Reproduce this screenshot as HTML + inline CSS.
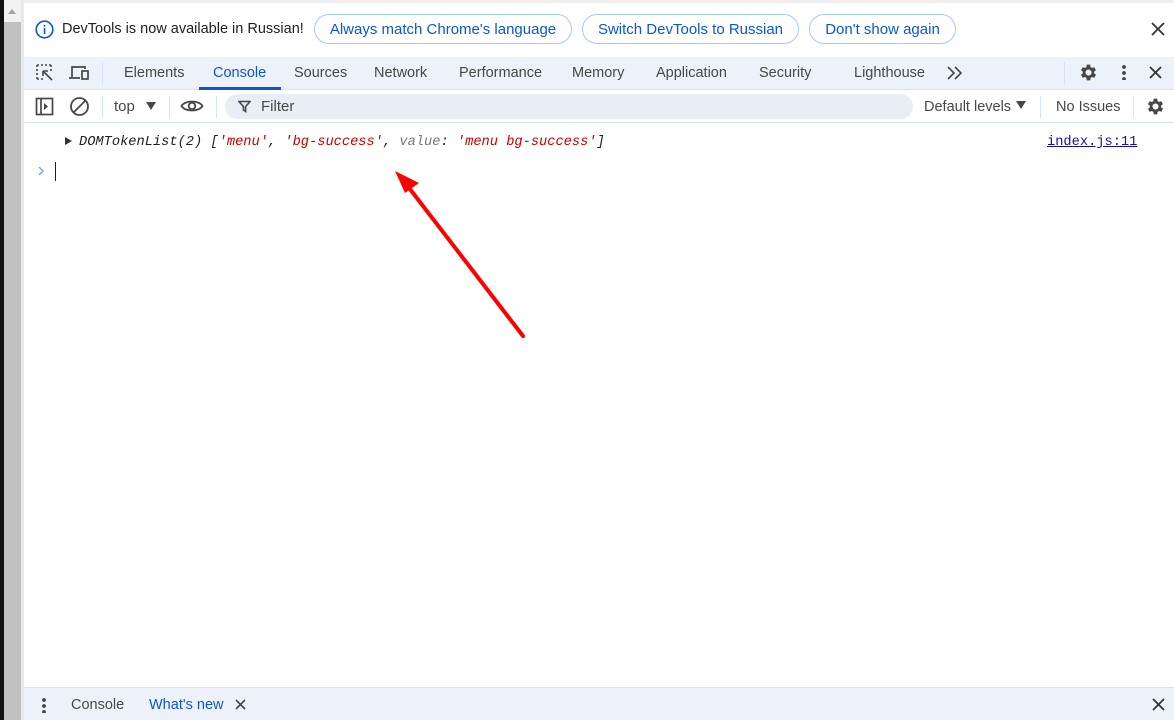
<!DOCTYPE html>
<html><head><meta charset="utf-8"><style>
*{margin:0;padding:0;box-sizing:border-box}
body{width:1174px;height:720px;overflow:hidden;background:#fff;font-family:"Liberation Sans",sans-serif;font-size:14px;color:#1f1f1f;position:relative}
.a{position:absolute;white-space:nowrap}
.btn{position:absolute;top:14px;height:30px;border:1px solid #a8c7fa;border-radius:15px;color:#0b57d0;font-size:15px;line-height:29px;text-align:center}
.tab{position:absolute;top:65px;font-size:14.5px;color:#474747}
.mono{font-family:"Liberation Mono",monospace;font-size:13.7px;font-style:italic}
</style></head><body>
<div class="a" style="left:0;top:0;width:4px;height:720px;background:#111"></div>
<div class="a" style="left:4px;top:0;width:17px;height:720px;background:#c1c1c1"></div>
<div class="a" style="left:4px;top:0;width:17px;height:22px;background:#f1f1f1"></div>
<div class="a" style="left:8px;top:9px;width:0;height:0;border-left:4px solid transparent;border-right:4px solid transparent;border-bottom:5px solid #a3a3a3"></div>
<div class="a" style="left:21px;top:0;width:3px;height:720px;background:#e8e8e8"></div>
<div class="a" style="left:24px;top:0;width:1150px;height:3px;background:#eee"></div>

<svg class="a" style="left:35px;top:20px" width="19" height="19" viewBox="0 0 19 19"><circle cx="9.5" cy="9.5" r="8.3" fill="none" stroke="#0b57d0" stroke-width="1.6"/><rect x="8.7" y="8" width="1.6" height="6" fill="#0b57d0"/><rect x="8.7" y="5" width="1.6" height="1.7" fill="#0b57d0"/></svg>
<div class="a" style="left:62px;top:21px;font-size:14.5px">DevTools is now available in Russian!</div>
<div class="btn" style="left:314px;width:258px">Always match Chrome's language</div>
<div class="btn" style="left:582px;width:217px">Switch DevTools to Russian</div>
<div class="btn" style="left:809px;width:147px">Don't show again</div>
<svg class="a" style="left:1151px;top:22px" width="14" height="14" viewBox="0 0 14 14" stroke="#333" stroke-width="1.8"><path d="M1 1l12 12M13 1L1 13"/></svg>

<div class="a" style="left:24px;top:57px;width:1150px;height:33px;background:#edf2fa;border-bottom:1px solid #d3e3fd"></div>
<svg class="a" style="left:35px;top:63px" width="20" height="20" viewBox="0 0 20 20" fill="none" stroke="#474747" stroke-width="1.6"><path d="M2 2h2M6 2h2M10 2h2M14 2h2M2 2v2M2 6v2M2 10v2M2 14v2M2 16h2M6 16h2M16 2v2M16 6v2"/><path d="M8 8l9 9M8 8h5M8 8v5"/></svg>
<svg class="a" style="left:68px;top:63px" width="22" height="20" viewBox="0 0 22 20" fill="none" stroke="#474747" stroke-width="1.7"><path d="M4 14V4h13v2M1 15h11"/><rect x="14" y="8" width="6" height="8"/></svg>
<div class="a" style="left:102px;top:62px;width:1px;height:22px;background:#d3e3fd"></div>
<div class="tab" style="left:124px">Elements</div>
<div class="tab" style="left:213px;color:#0b57d0">Console</div>
<div class="a" style="left:199px;top:87px;width:82px;height:3px;background:#0b57d0"></div>
<div class="tab" style="left:294px">Sources</div>
<div class="tab" style="left:374px">Network</div>
<div class="tab" style="left:459px">Performance</div>
<div class="tab" style="left:572px">Memory</div>
<div class="tab" style="left:656px">Application</div>
<div class="tab" style="left:759px">Security</div>
<div class="tab" style="left:854px">Lighthouse</div>
<svg class="a" style="left:946px;top:66px" width="17" height="14" viewBox="0 0 17 14" fill="none" stroke="#474747" stroke-width="1.6"><path d="M2 1l6 6-6 6M9 1l6 6-6 6"/></svg>
<div class="a" style="left:1064px;top:62px;width:1px;height:22px;background:#d3e3fd"></div>
<svg class="a" style="left:1078px;top:62px" width="21" height="21" viewBox="0 0 24 24"><path fill="#474747" d="M19.4 13a7.5 7.5 0 000-2l2.1-1.6-2-3.5-2.5 1a7 7 0 00-1.7-1L15 3h-4l-.4 2.9a7 7 0 00-1.7 1l-2.5-1-2 3.5L6.5 11a7.5 7.5 0 000 2l-2.1 1.6 2 3.5 2.5-1a7 7 0 001.7 1L11 21h4l.4-2.9a7 7 0 001.7-1l2.5 1 2-3.5zM13 15.5a3.5 3.5 0 110-7 3.5 3.5 0 010 7z" transform="translate(-1 0)"/></svg>
<div class="a" style="left:1122px;top:64px;width:4px;height:16px;background:radial-gradient(circle,#474747 1.8px,transparent 2px) 0 0/4px 6px"></div>
<svg class="a" style="left:1149px;top:66px" width="13" height="13" viewBox="0 0 13 13" stroke="#333" stroke-width="1.8"><path d="M1 1l11 11M12 1L1 12"/></svg>

<div class="a" style="left:24px;top:122px;width:1150px;height:1px;background:#d3e3fd"></div>
<svg class="a" style="left:35px;top:97px" width="19" height="19" viewBox="0 0 19 19" fill="none" stroke="#474747" stroke-width="1.7"><rect x="1.5" y="1.5" width="16" height="16"/><path d="M6 1.5v16"/><path d="M9 6l4 3.5-4 3.5z" fill="#474747" stroke="none"/></svg>
<svg class="a" style="left:69px;top:96px" width="21" height="21" viewBox="0 0 21 21" fill="none" stroke="#474747" stroke-width="1.8"><circle cx="10.5" cy="10.5" r="8.5"/><path d="M4.5 16.5l12-12"/></svg>
<div class="a" style="left:102px;top:96px;width:1px;height:22px;background:#d3e3fd"></div>
<div class="a" style="left:114px;top:98px;font-size:15px;color:#474747">top</div>
<div class="a" style="left:146px;top:102px;border-left:5px solid transparent;border-right:5px solid transparent;border-top:8px solid #474747"></div>
<div class="a" style="left:169px;top:96px;width:1px;height:22px;background:#d3e3fd"></div>
<svg class="a" style="left:180px;top:98px" width="24" height="16" viewBox="0 0 24 16" fill="none" stroke="#474747" stroke-width="1.8"><path d="M1.5 8C5 2 19 2 22.5 8 19 14 5 14 1.5 8z"/><circle cx="12" cy="8" r="3.3"/></svg>
<div class="a" style="left:216px;top:96px;width:1px;height:22px;background:#d3e3fd"></div>
<div class="a" style="left:225px;top:94px;width:688px;height:25px;border-radius:13px;background:#e9eef6"></div>
<svg class="a" style="left:238px;top:100px" width="13" height="13" viewBox="0 0 13 13" fill="none" stroke="#474747" stroke-width="1.6"><path d="M1 1.5h11L7.6 6.5v5L5.4 10V6.5z"/></svg>
<div class="a" style="left:261px;top:98px;font-size:15px;color:#474747">Filter</div>
<div class="a" style="left:924px;top:99px;font-size:14.5px;color:#474747">Default levels</div>
<div class="a" style="left:1016px;top:101px;border-left:5px solid transparent;border-right:5px solid transparent;border-top:8px solid #474747"></div>
<div class="a" style="left:1040px;top:96px;width:1px;height:22px;background:#d3e3fd"></div>
<div class="a" style="left:1056px;top:99px;font-size:14.5px;color:#474747">No Issues</div>
<div class="a" style="left:1133px;top:96px;width:1px;height:22px;background:#d3e3fd"></div>
<svg class="a" style="left:1145px;top:96px" width="21" height="21" viewBox="0 0 24 24"><path fill="#474747" d="M19.4 13a7.5 7.5 0 000-2l2.1-1.6-2-3.5-2.5 1a7 7 0 00-1.7-1L15 3h-4l-.4 2.9a7 7 0 00-1.7 1l-2.5-1-2 3.5L6.5 11a7.5 7.5 0 000 2l-2.1 1.6 2 3.5 2.5-1a7 7 0 001.7 1L11 21h4l.4-2.9a7 7 0 001.7-1l2.5 1 2-3.5zM13 15.5a3.5 3.5 0 110-7 3.5 3.5 0 010 7z" transform="translate(-1 0)"/></svg>

<div class="a" style="left:65px;top:137px;border-top:4.5px solid transparent;border-bottom:4.5px solid transparent;border-left:7px solid #333"></div>
<div class="a mono" style="left:79px;top:135px;color:#1f1f1f">DOMTokenList(2) [<span style="color:#c80000">'menu'</span>, <span style="color:#c80000">'bg-success'</span>, <span style="color:#777">value</span>: <span style="color:#c80000">'menu bg-success'</span>]</div>
<div class="a" style="left:1047px;top:135px;font-family:'Liberation Mono',monospace;font-size:13.7px;color:#1a0dab;text-decoration:underline">index.js:11</div>
<svg class="a" style="left:38px;top:166px" width="7" height="10" viewBox="0 0 7 10" fill="none" stroke="#7aa7f0" stroke-width="1.5"><path d="M1 1l4 4-4 4"/></svg>
<div class="a" style="left:55px;top:162px;width:1px;height:19px;background:#1f1f1f"></div>

<svg class="a" style="left:390px;top:168px" width="140" height="175" viewBox="390 168 140 175"><path d="M523 336L403 180" stroke="#f00" stroke-width="4" stroke-linecap="round"/><path d="M395 171l24 12-14 10z" fill="#f00"/></svg>

<div class="a" style="left:24px;top:687px;width:1150px;height:33px;background:#edf2fa;border-top:1px solid #d3e3fd"></div>
<div class="a" style="left:42px;top:697px;width:4px;height:16px;background:radial-gradient(circle,#474747 1.8px,transparent 2px) 0 0/4px 6px"></div>
<div class="a" style="left:71px;top:697px;font-size:14.5px;color:#474747">Console</div>
<div class="a" style="left:149px;top:697px;font-size:14.5px;color:#0b57d0">What's new</div>
<svg class="a" style="left:235px;top:699px" width="11" height="11" viewBox="0 0 11 11" stroke="#474747" stroke-width="1.6"><path d="M1 1l9 9M10 1L1 10"/></svg>
<svg class="a" style="left:1152px;top:698px" width="13" height="13" viewBox="0 0 13 13" stroke="#333" stroke-width="1.8"><path d="M1 1l11 11M12 1L1 12"/></svg>
</body></html>
